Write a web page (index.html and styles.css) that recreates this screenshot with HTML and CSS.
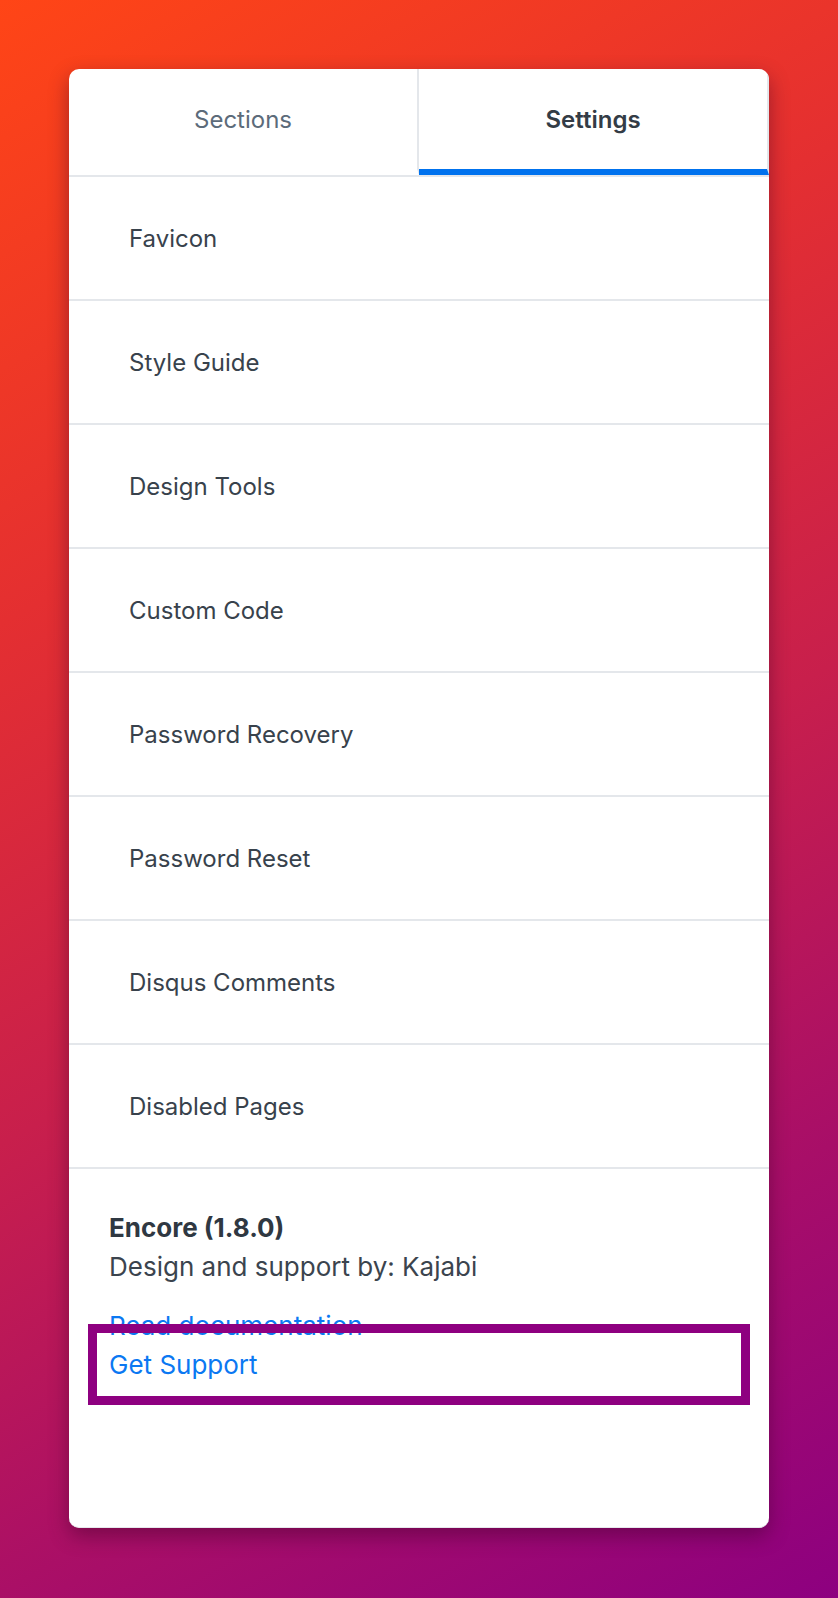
FILE: index.html
```html
<!DOCTYPE html>
<html lang="en">
<head>
<meta charset="utf-8">
<title>Theme settings</title>
<link rel="stylesheet" href="styles.css">
</head>
<body>
  <main class="panel">
    <nav class="tabs">
      <div class="tab">Sections</div>
      <div class="tab tab-active">Settings</div>
    </nav>
    <ul class="menu">
      <li class="menu-item">Favicon</li>
      <li class="menu-item">Style Guide</li>
      <li class="menu-item">Design Tools</li>
      <li class="menu-item">Custom Code</li>
      <li class="menu-item">Password Recovery</li>
      <li class="menu-item">Password Reset</li>
      <li class="menu-item">Disqus Comments</li>
      <li class="menu-item">Disabled Pages</li>
    </ul>
    <section class="about">
      <p class="theme-name">Encore (1.8.0)</p>
      <p class="theme-credit">Design and support by: Kajabi</p>
      <div class="links">
        <a class="link" href="#">Read documentation</a>
        <a class="link link-highlight" href="#">Get Support</a>
      </div>
    </section>
  </main>
</body>
</html>
```
FILE: styles.css
```css
* {
  box-sizing: border-box;
}

html, body {
  margin: 0;
  padding: 0;
}

body {
  min-height: 1598px;
  padding-top: 69px;
  font-family: "Inter", "Liberation Sans", sans-serif;
  background: linear-gradient(150deg, #ff4516 0%, #e42f31 30%, #c81f4c 55%, #a80e68 78%, #8d0080 100%);
}

.panel {
  width: 700px;
  margin: 0 auto;
  background: #ffffff;
  border-radius: 10px;
  border-bottom: 1px solid #e6e8eb;
  box-shadow: 0 8px 20px rgba(60, 0, 40, 0.45);
  overflow: hidden;
}

.tabs {
  display: flex;
  border-bottom: 2px solid #e4e7eb;
}

.tab {
  flex: 1;
  height: 106px;
  display: flex;
  align-items: center;
  justify-content: center;
  border-right: 2px solid #e4e7eb;
  border-bottom: 6px solid transparent;
  font-size: 24px;
  color: #5c6b7a;
}

.tab-active {
  border-bottom-color: #0072ee;
  color: #333c46;
  font-weight: 600;
}

.menu {
  list-style: none;
  margin: 0;
  padding: 0;
}

.menu-item {
  height: 124px;
  display: flex;
  align-items: center;
  padding-left: 60px;
  border-bottom: 2px solid #e4e7eb;
  font-size: 24px;
  color: #38424c;
}

.about {
  padding: 39px 40px 143px;
}

.theme-name,
.theme-credit {
  margin: 0;
  font-size: 26px;
  line-height: 39px;
}

.theme-name {
  font-weight: 700;
  color: #2f3842;
}

.theme-credit {
  color: #3b444e;
}

.links {
  margin-top: 20px;
  display: flex;
  flex-direction: column;
}

.link {
  display: block;
  font-size: 26px;
  line-height: 39px;
  color: #0b78f2;
  text-decoration: none;
}

.link-highlight {
  outline: 9px solid #8e0080;
  outline-offset: 12px;
}
```
